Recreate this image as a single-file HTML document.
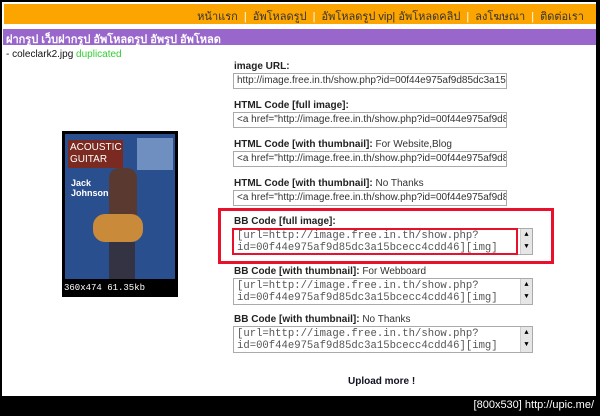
<!DOCTYPE html>
<html><head><meta charset="utf-8"><style>
*{margin:0;padding:0;box-sizing:border-box}
body{width:600px;height:416px;background:#000;position:relative;overflow:hidden;font-family:"Liberation Sans","Noto Sans CJK SC",sans-serif}
.pg{position:absolute;left:2px;top:2px;width:594px;height:394px;background:#fff}
.a{position:absolute}
.nav{left:4px;top:4px;width:592px;height:20px;background:#fca400;font-size:11px;color:#333;text-align:right;padding:3px 12px 0 0;font-family:"Liberation Sans","Noto Sans CJK SC",sans-serif}
.nav span{color:#fff;margin:0 3px}
.pur{left:3px;top:29px;width:593px;height:16px;background:#9966cc;color:#fff;font-size:11px;font-weight:bold;padding:1px 0 0 3px}
.lb{font-size:10px;font-weight:bold;color:#222;left:234px}
.lb i{font-style:normal;font-weight:normal;color:#333}
.in{left:233px;width:274px;height:16px;border:1px solid #aaa;font-size:10px;color:#333;padding:1px 3px;white-space:nowrap;overflow:hidden}
.ta{left:233px;width:300px;height:27px;border:1px solid #aaa;font-family:"Liberation Mono",monospace;font-size:10.6px;color:#555;padding:1px 3px;line-height:12px;white-space:nowrap;overflow:hidden}
.sb{position:absolute;right:0;top:0;width:12px;height:25px;background:#e6e6e6;border-left:1px solid #ccc;font-size:7px;text-align:center;line-height:12px;color:#000}
</style></head><body>
<div class="pg"></div>
<div class="a nav">หน้าแรก <span>|</span> อัพโหลดรูป <span>|</span> อัพโหลดรูป vip| อัพโหลดคลิป <span>|</span> ลงโฆษณา <span>|</span> ติดต่อเรา</div>
<div class="a pur">ฝากรูป เว็บฝากรูป อัพโหลดรูป อัพรูป อัพโหลด</div>
<div class="a" style="left:6px;top:49px;font-size:10px;color:#111">- coleclark2.jpg <span style="color:#3c3">duplicated</span></div>

<div class="a" style="left:62px;top:131px;width:116px;height:166px;background:#000">
 <div style="position:absolute;left:3px;top:3px;width:110px;height:145px;background:#2a4f8f">
  <div style="position:absolute;left:3px;top:6px;width:55px;height:28px;background:#7a2a20;color:#fff;font-size:10px;line-height:12px;padding:2px">ACOUSTIC<br>GUITAR</div>
  <div style="position:absolute;left:72px;top:4px;width:36px;height:32px;background:#6e8fc0"></div>
  <div style="position:absolute;left:6px;top:44px;color:#fff;font-weight:bold;font-size:9px;line-height:10px">Jack<br>Johnson</div>
  <div style="position:absolute;left:44px;top:34px;width:28px;height:50px;background:#5a3a30;border-radius:10px 10px 0 0"></div>
  <div style="position:absolute;left:28px;top:80px;width:50px;height:28px;background:#c98a3a;border-radius:12px"></div>
  <div style="position:absolute;left:44px;top:108px;width:26px;height:37px;background:#334"></div>
 </div>
 <div style="position:absolute;left:2px;top:152px;color:#fff;font-family:'Liberation Mono',monospace;font-size:9px">360x474 61.35kb</div>
</div>

<div class="a lb" style="top:61px">image URL:</div>
<div class="a in" style="top:73px">http://image.free.in.th/show.php?id=00f44e975af9d85dc3a15bc</div>
<div class="a lb" style="top:100px">HTML Code [full image]:</div>
<div class="a in" style="top:112px">&lt;a href="http://image.free.in.th/show.php?id=00f44e975af9d85c</div>
<div class="a lb" style="top:139px">HTML Code [with thumbnail]: <i>For Website,Blog</i></div>
<div class="a in" style="top:151px">&lt;a href="http://image.free.in.th/show.php?id=00f44e975af9d85c</div>
<div class="a lb" style="top:178px">HTML Code [with thumbnail]: <i>No Thanks</i></div>
<div class="a in" style="top:190px">&lt;a href="http://image.free.in.th/show.php?id=00f44e975af9d85c</div>

<div class="a" style="left:218px;top:208px;width:336px;height:56px;border:3px solid #e8102a"></div>
<div class="a lb" style="top:216px">BB Code [full image]:</div>
<div class="a ta" style="top:228px">[url=http://image.free.in.th/show.php?<br>id=00f44e975af9d85dc3a15bcecc4cdd46][img]<div class="sb">▲<br>▼</div></div>
<div class="a" style="left:232px;top:228px;width:286px;height:27px;border:2px solid #e8102a"></div>
<div class="a lb" style="top:266px">BB Code [with thumbnail]: <i>For Webboard</i></div>
<div class="a ta" style="top:278px">[url=http://image.free.in.th/show.php?<br>id=00f44e975af9d85dc3a15bcecc4cdd46][img]<div class="sb">▲<br>▼</div></div>
<div class="a lb" style="top:314px">BB Code [with thumbnail]: <i>No Thanks</i></div>
<div class="a ta" style="top:326px">[url=http://image.free.in.th/show.php?<br>id=00f44e975af9d85dc3a15bcecc4cdd46][img]<div class="sb">▲<br>▼</div></div>

<div class="a" style="left:348px;top:376px;font-size:10px;font-weight:bold;color:#112">Upload more !</div>
<div class="a" style="right:6px;top:399px;color:#fff;font-size:11px;font-family:'Liberation Sans',sans-serif">[800x530] http://upic.me/</div>
</body></html>
